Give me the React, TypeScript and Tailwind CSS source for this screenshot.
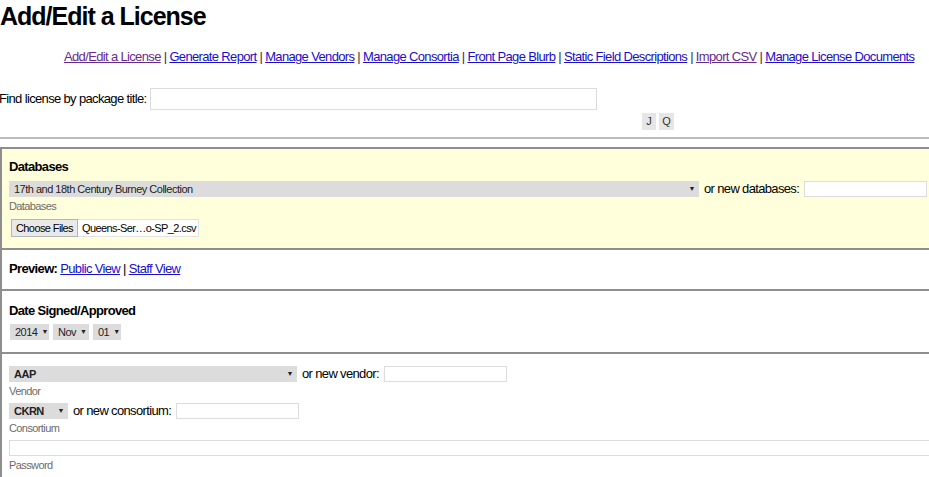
import React from 'react';

const font = { fontFamily: '"Liberation Sans", Arial, sans-serif' };

const navLinks: { label: string; visited?: boolean }[] = [
  { label: 'Add/Edit a License', visited: true },
  { label: 'Generate Report' },
  { label: 'Manage Vendors' },
  { label: 'Manage Consortia' },
  { label: 'Front Page Blurb' },
  { label: 'Static Field Descriptions' },
  { label: 'Import CSV', visited: true },
  { label: 'Manage License Documents' },
];

const FakeSelect: React.FC<{ value: string; className: string; bold?: boolean }> = ({ value, className, bold }) => (
  <div className={`shrink-0 h-[16px] leading-[16px] bg-[#dcdcdc] flex items-center justify-between pl-[5px] pr-[4px] text-[11px] tracking-[-0.5px] text-[#222] ${className}`}>
    <span className={`whitespace-nowrap ${bold ? 'font-bold' : ''}`}>{value}</span>
    <span className="text-[7px] text-[#222] ml-[4px]">▼</span>
  </div>
);

const TextBox: React.FC<{ className: string }> = ({ className }) => (
  <div className={`shrink-0 bg-white border border-[#dcdcdc] ${className}`} />
);

const Label: React.FC<{ children: React.ReactNode }> = ({ children }) => (
  <div className="mt-[2px] h-[14px] leading-[14px] text-[11px] tracking-[-0.6px] text-[#6b6b6b]">{children}</div>
);

export default function App() {
  return (
    <div className="w-[929px] h-[477px] overflow-hidden bg-white text-black" style={font}>
      <h1 className="text-[25px] leading-[32px] font-bold tracking-[-1px] whitespace-nowrap">Add/Edit a License</h1>

      {/* nav */}
      <div className="mt-[15px] pl-[64px] h-[20px] leading-[20px] text-[13px] tracking-[-0.65px] whitespace-nowrap">
        {navLinks.map((l, i) => (
          <React.Fragment key={l.label}>
            {i > 0 && <span className="text-[#333]"> | </span>}
            <a href="#" className={`underline ${l.visited ? 'text-[#6a2a8c]' : 'text-[#1a0dcc]'}`}>{l.label}</a>
          </React.Fragment>
        ))}
      </div>

      {/* search */}
      <div className="mt-[21px] flex items-center h-[22px] text-[13px] tracking-[-0.65px] whitespace-nowrap">
        <span className="-ml-[1px]">Find license by package title:</span>
        <TextBox className="ml-[4px] w-[447px] h-[22px]" />
      </div>
      <div className="mt-[3px] pl-[642px] flex gap-[3px]">
        <button className="w-[14px] h-[17px] bg-[#e6e6e6] text-[11px] text-[#333] leading-[17px]">J</button>
        <button className="w-[15px] h-[17px] bg-[#e6e6e6] text-[11px] text-[#333] leading-[17px]">Q</button>
      </div>
      <div className="mt-[7px] h-[2px] bg-[#bdbdbd]" />

      <div className="mt-[8px] w-[940px] text-[13px] tracking-[-0.65px]">
        {/* Databases */}
        <div className="bg-[#ffffdc] border-t-2 border-l-2 border-[#8e8e8e] pl-[7px] pt-[9px] pb-[11px]">
          <div className="h-[18px] leading-[18px] font-bold">Databases</div>
          <div className="mt-[5px] h-[16px] leading-[16px] flex items-center whitespace-nowrap">
            <FakeSelect value="17th and 18th Century Burney Collection" className="w-[690px]" />
            <span className="ml-[5px]">or new databases:</span>
            <TextBox className="ml-[5px] w-[123px] h-[16px]" />
          </div>
          <Label>Databases</Label>
          <div className="mt-[6px] ml-[2px] flex items-center h-[18px] text-[11px] tracking-[-0.6px] whitespace-nowrap">
            <div className="h-[18px] px-[4px] bg-[#e9e9e9] border border-[#b4b4b4] leading-[16px]">Choose Files</div>
            <div className="h-[18px] pl-[4px] pr-[2px] bg-white border border-[#e2e2e2] border-l-0 leading-[16px]">Queens-Ser…o-SP_2.csv</div>
          </div>
        </div>

        {/* Preview */}
        <div className="bg-white border-t-2 border-l-2 border-[#8e8e8e] pl-[7px] pt-[10px] pb-[11px]">
          <div className="h-[18px] leading-[18px]">
            <span className="font-bold">Preview: </span>
            <a href="#" className="underline text-[#1a0dcc]">Public View</a>
            <span> | </span>
            <a href="#" className="underline text-[#1a0dcc]">Staff View</a>
          </div>
        </div>

        {/* Date */}
        <div className="bg-white border-t-2 border-l-2 border-[#8e8e8e] pl-[7px] pt-[11px] pb-[12px]">
          <div className="h-[18px] leading-[18px] font-bold">Date Signed/Approved</div>
          <div className="mt-[4px] ml-[1px] flex gap-[4px]">
            <FakeSelect value="2014" className="w-[39px]" />
            <FakeSelect value="Nov" className="w-[36px]" />
            <FakeSelect value="01" className="w-[28px]" />
          </div>
        </div>

        {/* Vendor / consortium */}
        <div className="bg-white border-t-2 border-l-2 border-[#8e8e8e] pl-[7px] pt-[12px] pb-[20px]">
          <div className="h-[16px] leading-[16px] flex items-center whitespace-nowrap">
            <FakeSelect value="AAP" bold className="w-[288px]" />
            <span className="ml-[5px]">or new vendor:</span>
            <TextBox className="ml-[5px] w-[123px] h-[16px]" />
          </div>
          <Label>Vendor</Label>
          <div className="mt-[5px] h-[16px] leading-[16px] flex items-center whitespace-nowrap">
            <FakeSelect value="CKRN" bold className="w-[59px]" />
            <span className="ml-[5px]">or new consortium:</span>
            <TextBox className="ml-[5px] w-[123px] h-[16px]" />
          </div>
          <Label>Consortium</Label>
          <TextBox className="mt-[5px] w-full h-[16px]" />
          <Label>Password</Label>
        </div>
      </div>
    </div>
  );
}
